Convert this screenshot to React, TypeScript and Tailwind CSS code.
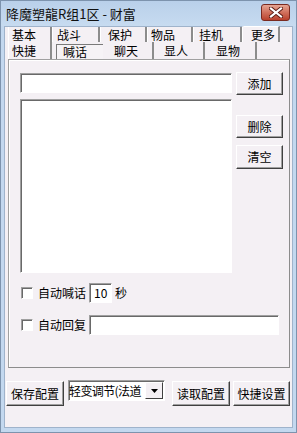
import React from 'react';

const font = { fontFamily: '"Noto Sans CJK SC", "Liberation Sans", sans-serif' };

const rowOne = [
  { label: '基本', w: 'w-[44px]', pl: 'pl-[3px]' },
  { label: '战斗', w: 'w-[48px]', pl: 'pl-[4px]' },
  { label: '保护', w: 'w-[47px]', pl: 'pl-[7px]' },
  { label: '物品', w: 'w-[46px]', pl: 'pl-[3px]' },
  { label: '挂机', w: 'w-[49px]', pl: 'pl-[5px]' },
];

const rowTwo = [
  { label: '聊天', w: 'w-[51px]', pl: 'pl-[11px]' },
  { label: '显人', w: 'w-[51px]', pl: 'pl-[10px]' },
  { label: '显物', w: 'w-[52px]', pl: 'pl-[11px]' },
];

// raised win32 button
const Btn = ({ label, className = '' }: { label: string; className?: string }) => (
  <div
    className={`flex items-center justify-center bg-[#f4f0f4] border border-t-white border-l-white border-r-[#404040] border-b-[#404040] shadow-[inset_-1px_-1px_0_#a0a0a0] text-[12px] text-black leading-none ${className}`}
  >
    {label}
  </div>
);

// sunken field
const sunken =
  'bg-white border border-t-[#a0a0a0] border-l-[#a0a0a0] border-r-white border-b-white shadow-[inset_1px_1px_0_#696969]';

const Check = () => <div className={`w-[12px] h-[12px] ${sunken}`} />;

export default function App() {
  return (
    <div
      className="w-[297px] h-[433px] flex flex-col bg-[#c3d8ef] border border-[#7d93ad] text-black select-none"
      style={font}
    >
      {/* title bar */}
      <div className="h-[25px] flex items-center bg-gradient-to-b from-[#b9d0ea] to-[#c7dbf0] pl-[5px] shrink-0">
        <span className="text-[13px] leading-none text-[#101010]">降魔塑龍R组1区 - 财富</span>
        <div className="ml-auto mr-[6px] mt-[-2px] w-[29px] h-[17px] rounded-[3px] border border-[#7a2a20] bg-gradient-to-b from-[#e5a594] via-[#d0705c] to-[#b8402c] flex items-center justify-center">
          <svg width="14" height="11" viewBox="0 0 14 11">
            <path d="M2 1.5 L12 9.5 M12 1.5 L2 9.5" stroke="#5a1a12" strokeWidth="4" strokeLinecap="square" />
            <path d="M2 1.5 L12 9.5 M12 1.5 L2 9.5" stroke="#ffffff" strokeWidth="2.2" strokeLinecap="square" />
          </svg>
        </div>
      </div>

      {/* client */}
      <div className="flex-1 mx-[3px] mb-[4px] bg-[#f4f0f4] border border-[#9fb3cb] flex flex-col">
        {/* tab rows */}
        <div className="pl-[3px] text-[12px] leading-none">
          <div className="flex h-[15px] items-end">
            {rowOne.map((t) => (
              <div
                key={t.label}
                className={`${t.w} ${t.pl} h-[15px] flex items-center border-l border-l-white border-r-2 border-r-[#8c8c8c]`}
              >
                {t.label}
              </div>
            ))}
            <div className="w-[38px] h-[16px] -mt-[1px] pl-[8px] flex items-center border-l border-t border-white border-r-2 border-r-[#8c8c8c] rounded-tl-[2px]">
              更多
            </div>
          </div>
          <div className="flex h-[17px]">
            <div className="w-[44px] pl-[3px] flex items-center border-l border-l-white border-r-2 border-r-[#8c8c8c]">
              快捷
            </div>
            <div className="w-[47px] ml-[4px] mt-[2px] pl-[6px] flex items-center border-l border-t border-[#7a7a7a] bg-[#f6f3f6]">
              喊话
            </div>
            {rowTwo.map((t) => (
              <div
                key={t.label}
                className={`${t.w} ${t.pl} flex items-center border-r-2 border-r-[#8c8c8c]`}
              >
                {t.label}
              </div>
            ))}
          </div>
        </div>

        {/* tab page */}
        <div className="ml-[3px] w-[282px] h-[309px] border border-t-[#a0a0a0] border-l-[#a0a0a0] border-r-[#8c8c8c] border-b-[#8c8c8c] shadow-[inset_1px_1px_0_#ffffff] pt-[12px] pl-[11px] text-[12px]">
          <div className="flex gap-[4px]">
            <div className={`w-[212px] h-[20px] mt-[1px] ${sunken}`} />
            <Btn label="添加" className="w-[47px] h-[23px]" />
          </div>
          <div className="flex gap-[4px] mt-[4px]">
            <div className={`w-[212px] h-[174px] ${sunken}`} />
            <div className="flex flex-col pt-[16px] gap-[7px]">
              <Btn label="删除" className="w-[47px] h-[23px]" />
              <Btn label="清空" className="w-[47px] h-[24px]" />
            </div>
          </div>

          <div className="flex items-center mt-[10px] h-[20px] pl-[1px]">
            <Check />
            <span className="ml-[5px] leading-none">自动喊话</span>
            <div className={`ml-[3px] w-[23px] h-[20px] flex items-center pl-[4px] leading-none ${sunken}`}>10</div>
            <span className="ml-[3px] leading-none">秒</span>
          </div>

          <div className="flex items-center mt-[12px] h-[20px] pl-[1px]">
            <Check />
            <span className="ml-[5px] leading-none">自动回复</span>
            <div className={`ml-[3px] w-[190px] h-[20px] ${sunken}`} />
          </div>
        </div>

        {/* bottom bar */}
        <div className="flex items-start mt-[13px] pl-[1px]">
          <Btn label="保存配置" className="w-[58px] h-[25px]" />
          <div className={`ml-[4px] mt-[-1px] w-[97px] h-[21px] flex items-center ${sunken}`}>
            <span className="flex-1 whitespace-nowrap leading-none text-[12px] tracking-[-0.6px]">轻变调节(法道</span>
            <div className="w-[18px] h-[17px] mr-[1px] flex items-center justify-center bg-[#f4f0f4] border border-t-white border-l-white border-r-[#404040] border-b-[#404040]">
              <svg width="7" height="4" viewBox="0 0 7 4">
                <path d="M0 0 H7 L3.5 4 Z" fill="#000" />
              </svg>
            </div>
          </div>
          <Btn label="读取配置" className="ml-[7px] w-[58px] h-[25px]" />
          <Btn label="快捷设置" className="ml-[3px] w-[57px] h-[25px]" />
        </div>
      </div>
    </div>
  );
}
